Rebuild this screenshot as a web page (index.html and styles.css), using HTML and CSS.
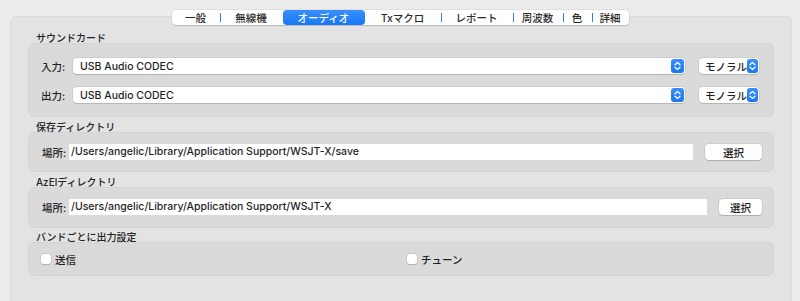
FILE: index.html
```html
<!DOCTYPE html>
<html lang="ja">

<head>
  <meta charset="UTF-8">
  <meta name="viewport" content="width=device-width, initial-scale=1.0">
  <title>設定 - オーディオ</title>
  <link rel="stylesheet" href="styles.css">
</head>

<body>
  <div class="window">
    <nav class="tabs">
      <span class="tab">一般</span>
      <span class="tab sep">無線機</span>
      <span class="tab active">オーディオ</span>
      <span class="tab">Txマクロ</span>
      <span class="tab sep">レポート</span>
      <span class="tab sep">周波数</span>
      <span class="tab sep">色</span>
      <span class="tab sep">詳細</span>
    </nav>

    <div class="panel">
      <section class="group">
        <div class="group-title">サウンドカード</div>
        <div class="group-box sound">
          <div class="row">
            <span class="field-label">入力:</span>
            <div class="combo">
              <span class="combo-text">USB Audio CODEC</span>
              <span class="stepper">
                <svg width="7" height="10" viewBox="0 0 7 10"><path d="M1 3.8 L3.5 1.5 L6 3.8 M1 6.2 L3.5 8.5 L6 6.2" fill="none" stroke="#fff" stroke-width="1.3" stroke-linecap="round" stroke-linejoin="round"/></svg>
              </span>
            </div>
            <div class="popup">
              <span class="popup-text">モノラル</span>
              <span class="stepper">
                <svg width="7" height="10" viewBox="0 0 7 10"><path d="M1 3.8 L3.5 1.5 L6 3.8 M1 6.2 L3.5 8.5 L6 6.2" fill="none" stroke="#fff" stroke-width="1.3" stroke-linecap="round" stroke-linejoin="round"/></svg>
              </span>
            </div>
          </div>
          <div class="row">
            <span class="field-label">出力:</span>
            <div class="combo">
              <span class="combo-text">USB Audio CODEC</span>
              <span class="stepper">
                <svg width="7" height="10" viewBox="0 0 7 10"><path d="M1 3.8 L3.5 1.5 L6 3.8 M1 6.2 L3.5 8.5 L6 6.2" fill="none" stroke="#fff" stroke-width="1.3" stroke-linecap="round" stroke-linejoin="round"/></svg>
              </span>
            </div>
            <div class="popup">
              <span class="popup-text">モノラル</span>
              <span class="stepper">
                <svg width="7" height="10" viewBox="0 0 7 10"><path d="M1 3.8 L3.5 1.5 L6 3.8 M1 6.2 L3.5 8.5 L6 6.2" fill="none" stroke="#fff" stroke-width="1.3" stroke-linecap="round" stroke-linejoin="round"/></svg>
              </span>
            </div>
          </div>
        </div>
      </section>

      <section class="group">
        <div class="group-title">保存ディレクトリ</div>
        <div class="group-box dir save-dir">
          <div class="row">
            <span class="field-label">場所:</span>
            <div class="path">/Users/angelic/Library/Application Support/WSJT-X/save</div>
            <button class="btn wide">選択</button>
          </div>
        </div>
      </section>

      <section class="group">
        <div class="group-title">AzElディレクトリ</div>
        <div class="group-box dir azel-dir">
          <div class="row">
            <span class="field-label">場所:</span>
            <div class="path">/Users/angelic/Library/Application Support/WSJT-X</div>
            <button class="btn">選択</button>
          </div>
        </div>
      </section>

      <section class="group">
        <div class="group-title">バンドごとに出力設定</div>
        <div class="group-box checks">
          <label class="check"><span class="box"></span>送信</label>
          <label class="check"><span class="box"></span>チューン</label>
        </div>
      </section>
    </div>
  </div>
</body>

</html>
```

FILE: styles.css
```css
* {
  box-sizing: border-box;
}

html,
body {
  margin: 0;
  height: 100%;
  overflow: hidden;
}

body {
  background: #ececec;
  color: #1f1f1f;
  font-family: Inter, "Noto Sans CJK JP", sans-serif;
  font-size: 10px;
  font-weight: 500;
}

.window {
  display: flex;
  flex-direction: column;
  min-height: 100vh;
}

/* segmented tab bar */
.tabs {
  align-self: center;
  display: flex;
  height: 15px;
  margin-top: 10px;
  margin-bottom: -9px;
  background: #fff;
  border-radius: 4px;
  box-shadow: 0 0 0 0.5px rgba(0, 0, 0, 0.12), 0 1px 1px rgba(0, 0, 0, 0.12);
  position: relative;
  z-index: 1;
}

.tab {
  display: flex;
  align-items: center;
  justify-content: center;
  font-size: 10.5px;
  color: #2a2a2a;
  position: relative;
}

.tab.sep::before {
  content: '';
  position: absolute;
  left: 0;
  top: 3px;
  bottom: 3px;
  width: 1px;
  background: #2f7ff0;
}

.tab.active {
  background: linear-gradient(#3a8ffc, #1677f4);
  color: #fff;
  border-radius: 4px;
}

.tab:nth-child(1) { width: 48px; }
.tab:nth-child(2) { width: 63px; }
.tab:nth-child(3) { width: 82px; }
.tab:nth-child(4) { width: 76px; }
.tab:nth-child(5) { width: 72px; }
.tab:nth-child(6) { width: 50px; }
.tab:nth-child(7) { width: 29px; }
.tab:nth-child(8) { width: 37px; }

/* main tab page */
.panel {
  flex: 1;
  min-height: 300px;
  margin: 0 8px 0 10px;
  padding: 16px 17px 0 17px;
  background: #e3e3e3;
  border: 1px solid #dbdbdb;
  border-radius: 6px;
}

.group + .group {
  margin-top: 5px;
}

.group:last-child {
  margin-top: 4px;
}

.group-title {
  height: 10px;
  line-height: 10px;
  padding-left: 8px;
  font-size: 10px;
  color: #222;
}

.group-box {
  background: #dadada;
  border-radius: 6px;
  box-shadow: inset 0 0 0 1px rgba(0, 0, 0, 0.025);
}

.row {
  display: flex;
  align-items: center;
  height: 16px;
}

.sound {
  padding: 15px 15px 14px 13px;
}

.sound .row + .row {
  margin-top: 13px;
}

.field-label {
  width: 32px;
  flex: none;
  font-size: 10.5px;
}

.combo {
  flex: 1;
  display: flex;
  align-items: center;
  height: 16px;
  background: #fff;
  border-radius: 4px;
  box-shadow: 0 0 0 0.5px rgba(0, 0, 0, 0.12), 0 1px 1px rgba(0, 0, 0, 0.12);
  padding-left: 7px;
}

.combo-text,
.popup-text {
  flex: 1;
  font-size: 10.5px;
  white-space: nowrap;
}

.stepper {
  display: flex;
  align-items: center;
  justify-content: center;
  width: 13px;
  height: 14px;
  margin-right: 1px;
  border-radius: 3px;
  background: linear-gradient(#3a8ffc, #1677f4);
}

.popup {
  display: flex;
  align-items: center;
  width: 60px;
  height: 16px;
  margin-left: 14px;
  padding-left: 6px;
  background: #fff;
  border-radius: 4px;
  box-shadow: 0 0 0 0.5px rgba(0, 0, 0, 0.12), 0 1px 1px rgba(0, 0, 0, 0.12);
}

.dir {
  padding: 12px 12px 12px 14px;
}

.azel-dir {
  padding-bottom: 13px;
}

.dir .field-label {
  width: 27px;
}

.path {
  flex: 1;
  height: 16px;
  line-height: 16px;
  padding-left: 2px;
  background: #fff;
  font-size: 10.5px;
  white-space: nowrap;
  overflow: hidden;
}

.btn {
  height: 16px;
  width: 43px;
  margin-left: 12px;
  padding: 0;
  border: none;
  border-radius: 4px;
  background: #fff;
  box-shadow: 0 0 0 0.5px rgba(0, 0, 0, 0.12), 0 1px 1px rgba(0, 0, 0, 0.15);
  font-family: inherit;
  font-weight: inherit;
  font-size: 10.5px;
  color: #1f1f1f;
}

.btn.wide {
  width: 57px;
}

.checks {
  display: grid;
  grid-template-columns: 366px 1fr;
  align-items: center;
  height: 34px;
  padding: 0 13px;
}

.check {
  display: flex;
  align-items: center;
  gap: 4px;
  font-size: 10.5px;
}

.box {
  width: 10px;
  height: 10px;
  background: #fff;
  border-radius: 2.5px;
  box-shadow: 0 0 0 0.5px rgba(0, 0, 0, 0.12), 0 0.5px 1px rgba(0, 0, 0, 0.15);
}
```
